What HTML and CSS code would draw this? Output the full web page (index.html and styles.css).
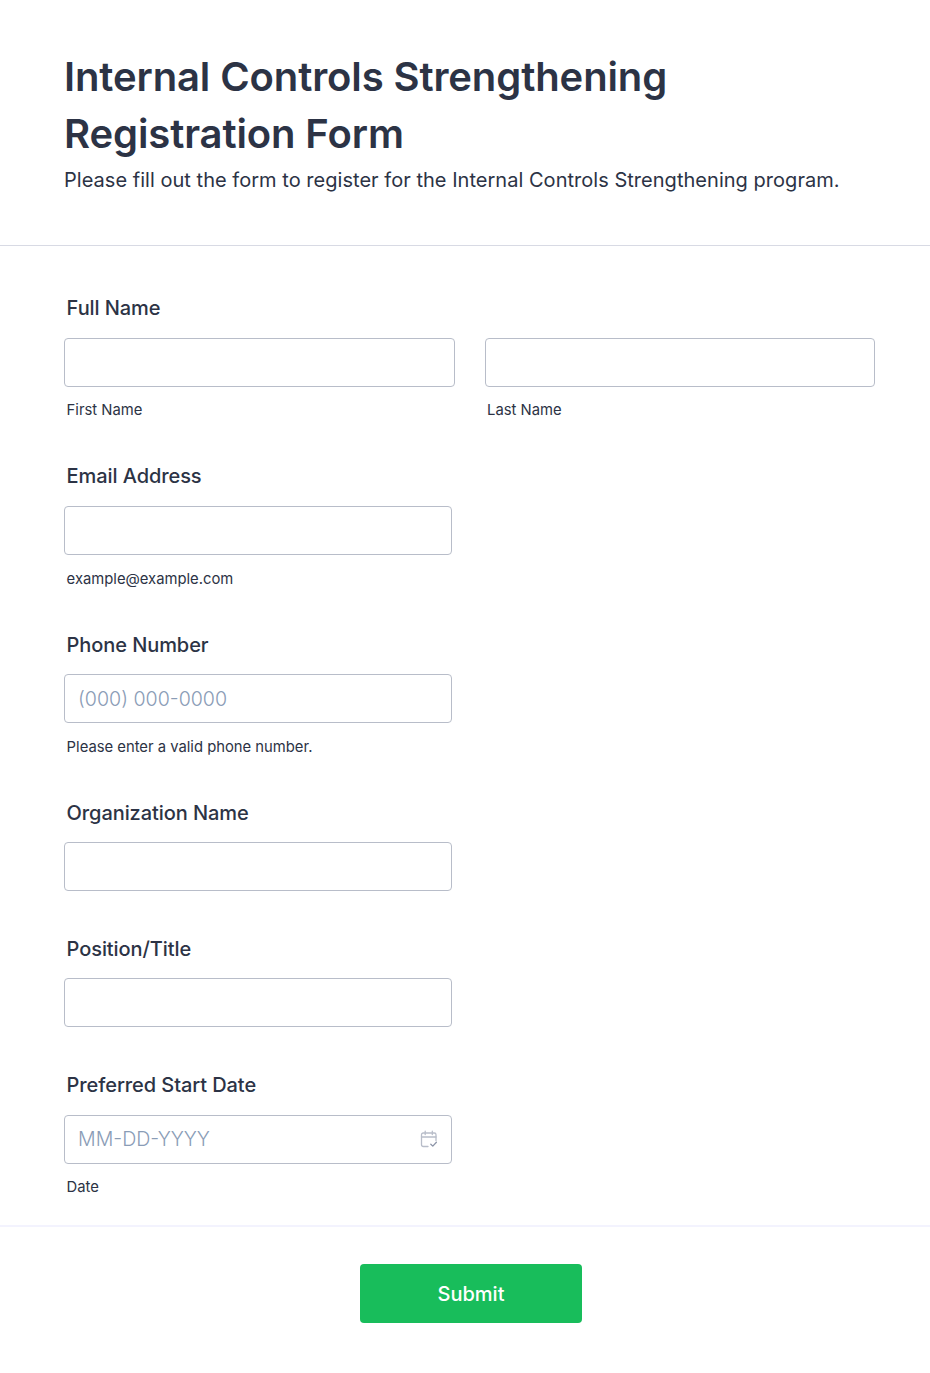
FILE: index.html
```html
<!DOCTYPE html>
<html lang="en">
<head>
<meta charset="utf-8">
<title>Internal Controls Strengthening Registration Form</title>
<link rel="stylesheet" href="styles.css">
</head>
<body>
<form class="form">
  <header class="form-header">
    <h1 class="form-title">Internal Controls Strengthening Registration Form</h1>
    <p class="form-subtitle">Please fill out the form to register for the Internal Controls Strengthening program.</p>
  </header>
  <div class="fields">
    <div class="field field-sub">
      <div class="field-label">Full Name</div>
      <div class="name-row">
        <label class="name-col">
          <input class="input" type="text">
          <span class="sublabel">First Name</span>
        </label>
        <label class="name-col">
          <input class="input" type="text">
          <span class="sublabel">Last Name</span>
        </label>
      </div>
    </div>
    <div class="field field-sub">
      <div class="field-label">Email Address</div>
      <input class="input input-half" type="text">
      <span class="sublabel sublabel-low">example@example.com</span>
    </div>
    <div class="field field-sub">
      <div class="field-label field-label-low">Phone Number</div>
      <input class="input input-half" type="text" placeholder="(000) 000-0000">
      <span class="sublabel sublabel-low">Please enter a valid phone number.</span>
    </div>
    <div class="field">
      <div class="field-label field-label-low">Organization Name</div>
      <input class="input input-half" type="text">
    </div>
    <div class="field">
      <div class="field-label field-label-low">Position/Title</div>
      <input class="input input-half" type="text">
    </div>
    <div class="field field-last">
      <div class="field-label field-label-date">Preferred Start Date</div>
      <div class="date-wrap">
        <input class="input input-date" type="text" placeholder="MM-DD-YYYY">
        <svg class="date-icon" width="18" height="18" viewBox="0 0 18 18" fill="none" stroke="#b8bdc9" stroke-width="1.3" stroke-linecap="round" stroke-linejoin="round" aria-hidden="true">
          <path d="M8 16.5H3.2A1.7 1.7 0 0 1 1.5 14.8V4.7A1.7 1.7 0 0 1 3.2 3h11.1a1.7 1.7 0 0 1 1.7 1.7v5.8"/>
          <path d="M1.5 7h14.5"/>
          <path d="M5.2 1.2v3.4M12.3 1.2v3.4"/>
          <path d="M10.8 14.2l2 1.9 3.6-3.9" stroke="#8d95a8"/>
        </svg>
      </div>
      <span class="sublabel">Date</span>
    </div>
  </div>
  <footer class="form-footer">
    <button class="submit" type="button">Submit</button>
  </footer>
</form>
</body>
</html>
```
FILE: styles.css
```css
* {
  box-sizing: border-box;
}

html,
body {
  margin: 0;
  padding: 0;
  background: #fff;
}

body {
  font-family: Inter, "Liberation Sans", sans-serif;
  color: #2c3345;
}

.form {
  width: 930px;
  height: 1373px;
  overflow: hidden;
}

.form-header {
  height: 246px;
  padding: 48px 64px 0;
  border-bottom: 1px solid #d8dae4;
}

.form-title {
  margin: 0;
  font-size: 40px;
  line-height: 57px;
  font-weight: 600;
  letter-spacing: -0.11px;
  width: 780px;
}

.form-subtitle {
  margin: 6px 0 0;
  font-size: 20px;
  line-height: 24px;
  font-weight: 400;
  letter-spacing: 0.03px;
}

.fields {
  padding: 50px 55px 0 64px;
  height: 981px;
  border-bottom: 2px solid #f3f3fe;
}

.field {
  height: 136px;
}

.field-sub {
  height: 168px;
}

.field-last {
  height: auto;
}

.field-label {
  font-size: 20px;
  line-height: 24px;
  font-weight: 450;
  letter-spacing: -0.08px;
  padding-left: 2.6px;
  margin-bottom: 18px;
}

.field-label-low {
  padding-top: 1px;
  margin-bottom: 17px;
}

.field-label-date {
  padding-top: 1px;
}

.name-row {
  display: flex;
  gap: 30px;
}

.name-col {
  display: block;
  flex: 1;
}

.input {
  display: block;
  width: 100%;
  height: 49px;
  padding: 0 13px;
  border: 1px solid #b8bdc9;
  border-radius: 4px;
  background: #fff;
  font: 300 19.6px Inter, "Liberation Sans", sans-serif;
  color: #2c3345;
  outline: none;
}

.input-date {
  padding-bottom: 2px;
}

.input::placeholder {
  color: #8a9cb6;
  opacity: 1;
}

.input-half,
.date-wrap {
  width: 388px;
}

.date-wrap {
  position: relative;
}

.date-icon {
  position: absolute;
  right: 14px;
  top: 15px;
}

.sublabel {
  display: block;
  margin-top: 14px;
  padding-left: 2.6px;
  font-size: 14.8px;
  line-height: 18px;
}

.sublabel-low {
  margin-top: 15px;
}

.form-footer {
  display: flex;
  padding: 37px 0 0 360px;
}

.submit {
  width: 222px;
  height: 59px;
  border: 0;
  border-radius: 4px;
  background: #18bd5b;
  color: #fff;
  font: 500 20px Inter, "Liberation Sans", sans-serif;
}
```
